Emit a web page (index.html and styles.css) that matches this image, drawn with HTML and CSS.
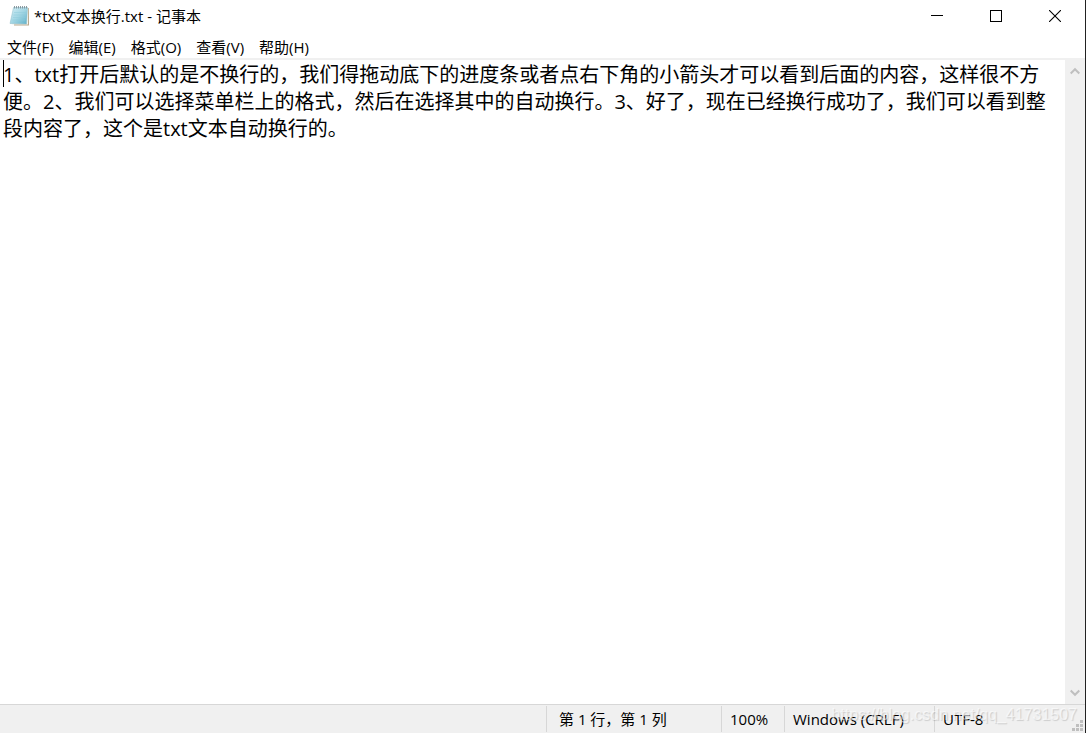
FILE: index.html
```html
<!DOCTYPE html>
<html lang="zh-CN">
<head>
  <meta charset="UTF-8">
  <title>*txt文本换行.txt - 记事本</title>
  <link rel="stylesheet" href="styles.css">
</head>
<body>
  <div class="window">
    <!-- Title bar -->
    <header class="title-bar">
      <svg class="app-icon" width="22" height="22" viewBox="0 0 22 22">
        <defs>
          <linearGradient id="pageFill" x1="0" y1="0" x2="1" y2="1">
            <stop offset="0" stop-color="#d3eef5"/>
            <stop offset="0.5" stop-color="#a3d6e4"/>
            <stop offset="1" stop-color="#5fb0c8"/>
          </linearGradient>
        </defs>
        <path d="M5 3 L20 3 L20 20.500 L5 20.500 Z" fill="#b9a88c"/>
        <path d="M4.500 2.500 L19.200 2.500 L19 19.500 L3 19.500 Z" fill="#f4f4ee"/>
        <path d="M4.500 2.500 L18.500 2.500 L17.500 19 L1 18.500 Z" fill="url(#pageFill)" stroke="#8dbccb" stroke-width="0.500"/>
        <path d="M5 7.500H17 M4.500 10H17 M4 12.500H16.500 M3.500 15H16" stroke="#8fcadb" stroke-width="0.500"/>
        <path d="M5.500 1v2.500 M7.500 1v2.500 M9.500 1v2.500 M11.500 1v2.500 M13.500 1v2.500 M15.500 1v2.500 M17.500 1v2.500" stroke="#7f9097" stroke-width="0.900"/>
      </svg>
      <h1 class="title">*txt文本换行.txt - 记事本</h1>
      <div class="window-controls">
        <button class="control" aria-label="最小化">
          <svg width="12" height="12" viewBox="0 0 12 12"><path d="M0 5.500H12" stroke="#000"/></svg>
        </button>
        <button class="control" aria-label="最大化">
          <svg width="12" height="12" viewBox="0 0 12 12"><rect x="0.500" y="0.500" width="11" height="11" fill="none" stroke="#000"/></svg>
        </button>
        <button class="control" aria-label="关闭">
          <svg width="12" height="12" viewBox="0 0 12 12"><path d="M0 0L12 12M12 0L0 12" stroke="#000" stroke-width="1.100"/></svg>
        </button>
      </div>
    </header>

    <!-- Menu -->
    <nav class="menu-bar">
      <button class="menu-item">文件(F)</button>
      <button class="menu-item">编辑(E)</button>
      <button class="menu-item">格式(O)</button>
      <button class="menu-item">查看(V)</button>
      <button class="menu-item">帮助(H)</button>
    </nav>

    <!-- Text area -->
    <main class="editor">
      <textarea class="editor-text" aria-label="文本编辑器" spellcheck="false">1、txt打开后默认的是不换行的，我们得拖动底下的进度条或者点右下角的小箭头才可以看到后面的内容，这样很不方便。2、我们可以选择菜单栏上的格式，然后在选择其中的自动换行。3、好了，现在已经换行成功了，我们可以看到整段内容了，这个是txt文本自动换行的。</textarea>
      <span class="caret"></span>
      <div class="scrollbar">
        <button class="scroll-btn" aria-label="向上滚动">
          <svg width="10" height="8" viewBox="0 0 10 8"><path d="M0.700 6.500L5 2.200L9.300 6.500" fill="none" stroke="#bfbfbf" stroke-width="2"/></svg>
        </button>
        <button class="scroll-btn" aria-label="向下滚动">
          <svg width="10" height="8" viewBox="0 0 10 8"><path d="M0.700 1.500L5 5.800L9.300 1.500" fill="none" stroke="#bfbfbf" stroke-width="2"/></svg>
        </button>
      </div>
    </main>

    <!-- Status bar -->
    <footer class="status-bar">
      <div class="status-cell status-position">第 1 行，第 1 列</div>
      <div class="status-cell status-zoom">100%</div>
      <div class="status-cell status-newline">Windows (CRLF)</div>
      <div class="status-cell status-encoding">UTF-8</div>
      <svg class="grip" width="12" height="12" viewBox="0 0 12 12">
        <path d="M8 0h3v3h-3z M4 4h3v3h-3z M8 4h3v3h-3z M0 8h3v3h-3z M4 8h3v3h-3z M8 8h3v3h-3z" fill="#bfbfbf"/>
      </svg>
      <span class="watermark">https://blog.csdn.net/qq_41731507</span>
    </footer>
  </div>
</body>
</html>
```

FILE: styles.css
```css
* {
  box-sizing: border-box;
  margin: 0;
  padding: 0;
}

body {
  font-family: "Open Sans", "Noto Sans CJK SC", sans-serif;
  font-size: 15px;
  color: #000;
  background: #fff;
}

button {
  font: inherit;
  color: inherit;
  background: none;
  border: none;
}

svg {
  display: block;
}

.window {
  display: flex;
  flex-direction: column;
  height: 100vh;
  border-right: 1px solid #222;
}

/* Title bar */
.title-bar {
  display: flex;
  align-items: center;
  height: 32px;
  padding-left: 9px;
}

.title {
  flex: 1;
  margin-left: 3px;
  font-size: 15px;
  font-weight: 400;
  line-height: 20px;
}

.window-controls {
  display: flex;
  margin-right: 1px;
}

.control {
  display: flex;
  align-items: center;
  justify-content: center;
  width: 59px;
  height: 32px;
}

.control:hover {
  background: #e5e5e5;
}

/* Menu */
.menu-bar {
  display: flex;
  gap: 1px;
  height: 28px;
  border-bottom: 2px solid #f0f0f0;
}

.menu-item {
  padding: 2px 7px 0;
  line-height: 26px;
}

.menu-item:hover {
  background: #e5f3ff;
}

/* Text area */
.editor {
  position: relative;
  display: flex;
  flex: 1;
  min-height: 0;
}

.editor-text {
  flex: 1;
  padding: 1px 12px 0 3px;
  font-family: inherit;
  font-size: 20px;
  line-height: 27px;
  color: #000;
  border: none;
  outline: none;
  resize: none;
}

.caret {
  position: absolute;
  top: 0;
  left: 3px;
  width: 1px;
  height: 27px;
  background: #000;
}

.scrollbar {
  display: flex;
  flex-direction: column;
  justify-content: space-between;
  width: 20px;
  background: #f0f0f0;
}

.scroll-btn {
  display: flex;
  align-items: center;
  justify-content: center;
  height: 22px;
}

/* Status bar */
.status-bar {
  position: relative;
  display: flex;
  justify-content: flex-end;
  height: 29px;
  padding-top: 1px;
  background: #f0f0f0;
  border-top: 1px solid #d7d7d7;
}

.status-cell {
  height: 26px;
  padding-left: 8px;
  line-height: 26px;
  white-space: nowrap;
  border-left: 1px solid #d7d7d7;
}

.status-position {
  width: 175px;
  padding-left: 12px;
}

.status-zoom {
  width: 63px;
}

.status-newline {
  width: 150px;
}

.status-encoding {
  width: 151px;
}

.grip {
  position: absolute;
  right: 1px;
  bottom: 1px;
}

.watermark {
  position: absolute;
  right: 8px;
  top: 0;
  font-family: "Liberation Sans", Arial, sans-serif;
  font-size: 16px;
  line-height: 20px;
  color: rgba(255, 255, 255, 0.6);
  text-shadow: 1px 1px 1px rgba(0, 0, 0, 0.15);
  pointer-events: none;
}
```
